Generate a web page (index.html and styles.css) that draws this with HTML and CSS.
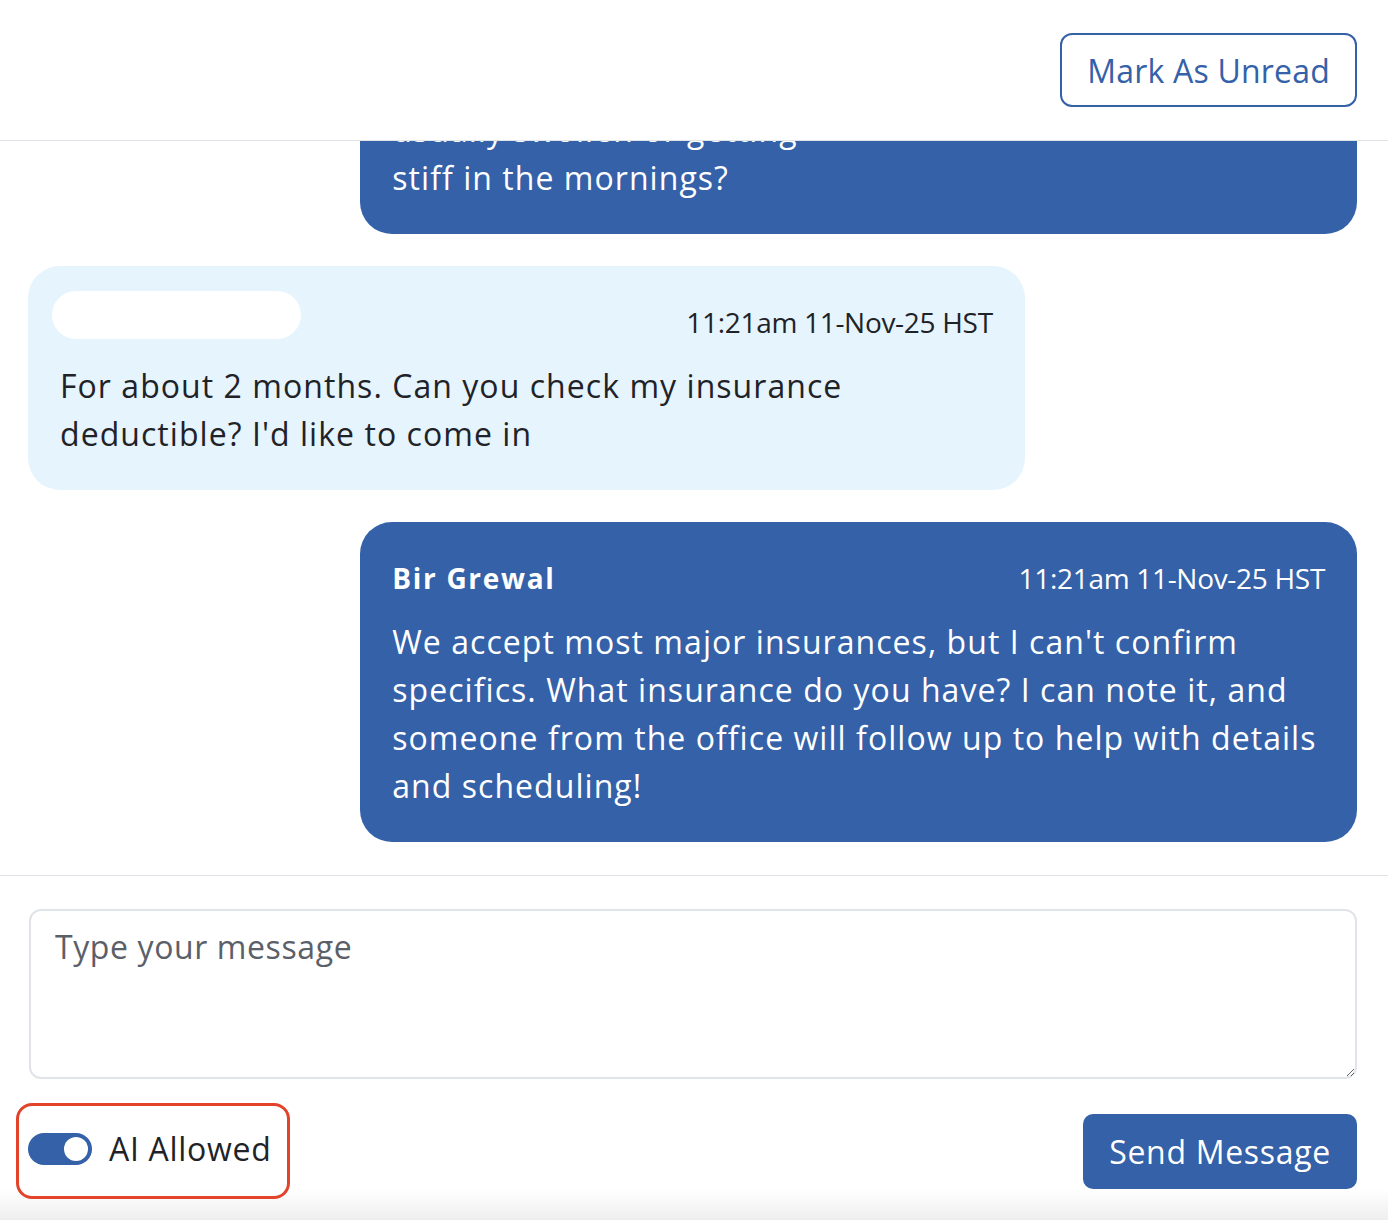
FILE: index.html
```html
<!DOCTYPE html>
<html lang="en">
<head>
  <meta charset="UTF-8">
  <meta name="viewport" content="width=device-width, initial-scale=1.0">
  <title>Conversation</title>
  <link rel="stylesheet" href="styles.css">
</head>
<body>
  <div class="page">
    <!-- Top bar -->
    <div class="topbar">
      <button class="outline-button">Mark As Unread</button>
    </div>

    <!-- Messages -->
    <div class="messages">
      <div class="bubble outgoing">
        <div class="bubble-body">How long has the knee been bothering you, and is it usually swollen or getting<br>stiff in the mornings?</div>
      </div>

      <div class="bubble incoming">
        <div class="bubble-head">
          <span class="sender redacted"></span>
          <span class="time">11:21am 11-Nov-25 HST</span>
        </div>
        <div class="bubble-body">For about 2 months. Can you check my insurance deductible? I'd like to come in</div>
      </div>

      <div class="bubble outgoing">
        <div class="bubble-head">
          <span class="sender">Bir Grewal</span>
          <span class="time">11:21am 11-Nov-25 HST</span>
        </div>
        <div class="bubble-body">We accept most major insurances, but I can't confirm specifics. What insurance do you have? I can note it, and someone from the office will follow up to help with details and scheduling!</div>
      </div>
    </div>

    <!-- Composer -->
    <div class="composer">
      <textarea class="message-input" placeholder="Type your message"></textarea>
      <div class="composer-row">
        <label class="ai-toggle">
          <span class="switch"><span class="knob"></span></span>
          <span>AI Allowed</span>
        </label>
        <button class="send-button">Send Message</button>
      </div>
    </div>
  </div>
</body>
</html>
```

FILE: styles.css
```css
/* Base */
body {
  margin: 0;
  font-family: "Open Sans", "Noto Sans", sans-serif;
  letter-spacing: 0.7px;
  color: #1f2328;
  background: linear-gradient(to bottom, #ffffff 1190px, #eeeeee 1220px);
}

.page {
  height: 1220px;
  display: flex;
  flex-direction: column;
  overflow: hidden;
}

/* Top bar */
.topbar {
  height: 140px;
  flex-shrink: 0;
  display: flex;
  align-items: center;
  justify-content: flex-end;
  padding: 0 31px;
  border-bottom: 1px solid #e0e3e8;
  background-color: #fff;
}

.outline-button {
  font-family: inherit;
  font-size: 32px;
  letter-spacing: 0.2px;
  color: #3461a8;
  background: #fff;
  border: 2px solid #3461a8;
  border-radius: 12px;
  height: 74px;
  padding: 0 25px;
  cursor: pointer;
}

/* Message list */
.messages {
  height: 735px;
  flex-shrink: 0;
  display: flex;
  flex-direction: column;
  justify-content: flex-end;
  gap: 32px;
  padding: 0 31px 33px 28px;
  overflow: hidden;
  border-bottom: 1px solid #e0e3e8;
  box-sizing: border-box;
}

.bubble {
  max-width: 75%;
  box-sizing: border-box;
  padding: 32px;
  border-radius: 32px;
  flex-shrink: 0;
}

.incoming {
  align-self: flex-start;
  background-color: #e6f4fd;
  color: #1f2328;
}

.outgoing {
  align-self: flex-end;
  width: 75%;
  background-color: #3461a8;
  color: #fff;
}

.bubble-head {
  display: flex;
  align-items: center;
  justify-content: space-between;
  height: 48px;
  margin-bottom: 16px;
  font-size: 28px;
}

.time {
  letter-spacing: -0.3px;
}

.sender {
  font-weight: 700;
  letter-spacing: 1.7px;
}

.redacted {
  position: relative;
  top: -7px;
  left: -8px;
  width: 249px;
  height: 48px;
  border-radius: 24px;
  background-color: #fff;
}

.bubble-body {
  font-size: 32px;
  line-height: 48px;
  letter-spacing: 1.05px;
}

/* Composer */
.composer {
  padding: 33px 31px 0 29px;
}

.message-input {
  display: block;
  width: 100%;
  height: 170px;
  box-sizing: border-box;
  padding: 12px 24px;
  font-family: inherit;
  font-size: 32px;
  letter-spacing: 0.6px;
  line-height: 48px;
  color: #1f2328;
  border: 2px solid #e0e3e8;
  border-radius: 12px;
  background: #fff;
  resize: vertical;
}

.message-input::placeholder {
  color: #5b6068;
}

.composer-row {
  display: flex;
  align-items: center;
  justify-content: space-between;
  margin-top: 24px;
}

.ai-toggle {
  display: flex;
  align-items: center;
  gap: 17px;
  margin-left: -13px;
  padding: 27px 16px 31px 9px;
  border: 3px solid #e2432a;
  border-radius: 16px;
  font-size: 32px;
  line-height: 32px;
}

.switch {
  width: 64px;
  height: 32px;
  border-radius: 16px;
  background-color: #3461a8;
  display: flex;
  align-items: center;
  justify-content: flex-end;
  padding: 0 4px;
  box-sizing: border-box;
}

.knob {
  width: 24px;
  height: 24px;
  border-radius: 50%;
  background-color: #fff;
}

.send-button {
  font-family: inherit;
  font-size: 32px;
  letter-spacing: 0.7px;
  color: #fff;
  background-color: #3461a8;
  border: none;
  border-radius: 10px;
  height: 75px;
  padding: 0 26px;
  cursor: pointer;
}
```
